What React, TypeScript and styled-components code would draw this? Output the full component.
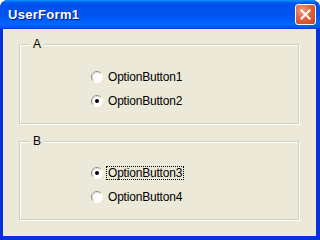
import React from "react";
import styled, { createGlobalStyle } from "styled-components";

const GlobalStyle = createGlobalStyle`
  html, body {
    margin: 0;
    padding: 0;
    background: #ffffff;
  }
`;

const Window = styled.div`
  display: flex;
  flex-direction: column;
  width: 320px;
  height: 240px;
  background: #0831d9;
  border-radius: 8px 8px 0 0;
  overflow: hidden;
  font-family: "Liberation Sans", Arial, sans-serif;
`;

const TitleBar = styled.div`
  display: flex;
  align-items: center;
  justify-content: space-between;
  height: 29px;
  padding: 0 4px 0 8px;
  box-sizing: border-box;
  background: linear-gradient(
    180deg,
    #0997ff 0%,
    #0053ee 10%,
    #0050ee 45%,
    #0066ff 85%,
    #0058ea 93%,
    #003dd7 100%
  );
`;

const Title = styled.span`
  color: #ffffff;
  font-size: 13px;
  font-weight: bold;
  letter-spacing: 0.3px;
  text-shadow: 1px 1px 0 #0a1883;
`;

const CloseButton = styled.div`
  display: flex;
  align-items: center;
  justify-content: center;
  width: 21px;
  height: 21px;
  box-sizing: border-box;
  border: 1px solid #ffffff;
  border-radius: 3px;
  background: radial-gradient(circle at 35% 30%, #f0a080 0%, #e2633c 45%, #c7401c 100%);
`;

const Client = styled.div`
  flex: 1;
  margin: 0 4px 4px 3px;
  padding: 15px 17px 0 16px;
  background: #ece9d8;
  display: flex;
  flex-direction: column;
  gap: 17px;
`;

const Frame = styled.div<{ $height: number; $top: number }>`
  position: relative;
  height: ${(p) => p.$height}px;
  box-sizing: border-box;
  border: 1px solid #d0d0bf;
  box-shadow: inset 1px 1px 0 #ffffff, 1px 1px 0 #ffffff;
  padding: ${(p) => p.$top}px 0 0 71px;
  display: flex;
  flex-direction: column;
`;

const Legend = styled.span`
  position: absolute;
  top: -7px;
  left: 10px;
  padding: 0 3px;
  background: #ece9d8;
  font-size: 12px;
  line-height: 13px;
  color: #000000;
`;

const Option = styled.label`
  display: flex;
  align-items: center;
  gap: 3px;
  height: 24px;
  font-size: 12px;
  letter-spacing: -0.2px;
  color: #000000;
`;

const Caption = styled.span<{ $focused?: boolean }>`
  padding: 0 1px;
  line-height: 12px;
  border: 1px dotted ${(p) => (p.$focused ? "#000000" : "transparent")};
`;

const Radio = ({ checked }: { checked?: boolean }) => (
  <svg width="12" height="12" viewBox="0 0 12 12">
    <circle cx="6" cy="6" r="5.5" fill="#ffffff" />
    <path d="M2.1 9.9 A5.5 5.5 0 0 1 9.9 2.1" fill="none" stroke="#8e8f8f" />
    <path d="M2.8 9.2 A4.5 4.5 0 0 1 9.2 2.8" fill="none" stroke="#d8d6cc" />
    <path d="M9.9 2.1 A5.5 5.5 0 0 1 2.1 9.9" fill="none" stroke="#ffffff" />
    {checked && <circle cx="6" cy="6" r="2" fill="#000000" />}
  </svg>
);

const groups = [
  { name: "A", top: 20, height: 80, options: ["OptionButton1", "OptionButton2"], checked: 1, focus: -1 },
  { name: "B", top: 19, height: 79, options: ["OptionButton3", "OptionButton4"], checked: 0, focus: 0 },
];

const App = () => (
  <>
    <GlobalStyle />
    <Window>
      <TitleBar>
        <Title>UserForm1</Title>
        <CloseButton>
          <svg width="11" height="11" viewBox="0 0 11 11">
            <path d="M1.5 1.5 L9.5 9.5 M9.5 1.5 L1.5 9.5" stroke="#ffffff" strokeWidth="2" strokeLinecap="square" />
          </svg>
        </CloseButton>
      </TitleBar>
      <Client>
        {groups.map((g) => (
          <Frame key={g.name} $height={g.height} $top={g.top}>
            <Legend>{g.name}</Legend>
            {g.options.map((o, i) => (
              <Option key={o}>
                <Radio checked={i === g.checked} />
                <Caption $focused={i === g.focus}>{o}</Caption>
              </Option>
            ))}
          </Frame>
        ))}
      </Client>
    </Window>
  </>
);

export default App;
